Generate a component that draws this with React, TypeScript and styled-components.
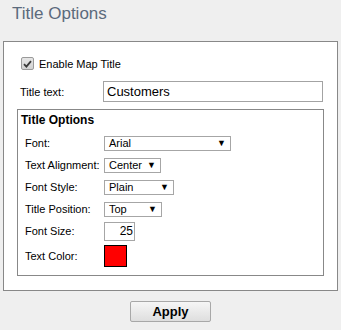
import styled, { createGlobalStyle } from "styled-components";

const GlobalStyle = createGlobalStyle`
  html, body {
    margin: 0;
    padding: 0;
    background: #efefef;
    font-family: "Liberation Sans", Arial, sans-serif;
  }
`;

const Page = styled.div`
  width: 341px;
  height: 330px;
  box-sizing: border-box;
  padding: 0 3px;
`;

const Heading = styled.h1`
  margin: 0;
  padding: 4px 0 0 9px;
  height: 41px;
  box-sizing: border-box;
  font-size: 17px;
  font-weight: normal;
  color: #5b6a7c;
`;

const Panel = styled.div`
  width: 335px;
  height: 250px;
  box-sizing: border-box;
  border: 1px solid #888;
  background: #fff;
  padding: 15px 13px 0 13px;
`;

const CheckRow = styled.label`
  display: flex;
  align-items: center;
  gap: 5px;
  padding-left: 4px;
  font-size: 11px;
  color: #000;
`;

const CheckBox = styled.span`
  width: 11px;
  height: 11px;
  border: 1px solid #9a9a9a;
  border-radius: 2px;
  background: linear-gradient(#e6e6e6, #d2d2d2);
  display: flex;
  align-items: center;
  justify-content: center;
`;

const TitleRow = styled.div`
  display: grid;
  grid-template-columns: 86px 1fr;
  align-items: center;
  margin-top: 11px;
  margin-right: 1px;
`;

const Label = styled.span<{ $indent?: number }>`
  font-size: 11px;
  color: #000;
  padding-left: ${(p) => p.$indent ?? 0}px;
`;

const TextInput = styled.div`
  height: 21px;
  box-sizing: border-box;
  border: 1px solid #a3a3a3;
  background: #fff;
  font-size: 13px;
  padding: 1px 0 0 3px;
  line-height: 17px;
`;

const Fieldset = styled.div`
  margin-top: 7px;
  width: 307px;
  height: 167px;
  box-sizing: border-box;
  border: 1px solid #888;
  padding: 3px 0 0 3px;
`;

const Legend = styled.div`
  font-size: 12px;
  font-weight: bold;
  color: #000;
  height: 19px;
`;

const OptionGrid = styled.div`
  display: grid;
  grid-template-columns: 79px auto;
  grid-template-rows: repeat(5, 22px) 28px;
  align-items: center;
  justify-items: start;
  padding-left: 4px;
`;

const Select = styled.div<{ $width: number }>`
  width: ${(p) => p.$width}px;
  height: 15px;
  box-sizing: border-box;
  border: 1px solid #a6a6a6;
  background: #fff;
  display: flex;
  align-items: center;
  justify-content: space-between;
  padding: 0 4px 0 4px;
  font-size: 11px;
  color: #000;
`;

const Arrow = styled.span`
  font-size: 9px;
  line-height: 1;
`;

const NumberInput = styled.div`
  width: 31px;
  height: 19px;
  box-sizing: border-box;
  border: 1px solid #a6a6a6;
  background: #fff;
  font-size: 12px;
  text-align: right;
  padding-right: 1px;
  line-height: 17px;
`;

const Swatch = styled.div<{ $color: string }>`
  width: 23px;
  height: 22px;
  box-sizing: border-box;
  border: 1px solid #000;
  background: ${(p) => p.$color};
`;

const Footer = styled.div`
  display: flex;
  justify-content: center;
  padding-top: 10px;
`;

const Button = styled.button`
  width: 81px;
  height: 21px;
  border: 1px solid #a8a8a8;
  border-radius: 2px;
  background: linear-gradient(#f6f6f6, #dedede);
  font-family: "Liberation Sans", Arial, sans-serif;
  font-size: 13px;
  font-weight: bold;
  color: #000;
  padding: 0;
`;

const selects = [
  { label: "Font:", value: "Arial", width: 127 },
  { label: "Text Alignment:", value: "Center", width: 57 },
  { label: "Font Style:", value: "Plain", width: 70 },
  { label: "Title Position:", value: "Top", width: 58 },
];

function App() {
  return (
    <Page>
      <GlobalStyle />
      <Heading>Title Options</Heading>
      <Panel>
        <CheckRow>
          <CheckBox>
            <svg width="9" height="8" viewBox="0 0 9 8">
              <path d="M1 4.2 L3.4 6.6 L8 1.2" fill="none" stroke="#3a3a3a" strokeWidth="1.8" />
            </svg>
          </CheckBox>
          Enable Map Title
        </CheckRow>
        <TitleRow>
          <Label $indent={3}>Title text:</Label>
          <TextInput>Customers</TextInput>
        </TitleRow>
        <Fieldset>
          <Legend>Title Options</Legend>
          <OptionGrid>
            {selects.map((s) => [
              <Label key={s.label}>{s.label}</Label>,
              <Select key={s.label + "-sel"} $width={s.width}>
                {s.value}
                <Arrow>▼</Arrow>
              </Select>,
            ])}
            <Label>Font Size:</Label>
            <NumberInput>25</NumberInput>
            <Label>Text Color:</Label>
            <Swatch $color="#ff0000" />
          </OptionGrid>
        </Fieldset>
      </Panel>
      <Footer>
        <Button>Apply</Button>
      </Footer>
    </Page>
  );
}

export default App;
